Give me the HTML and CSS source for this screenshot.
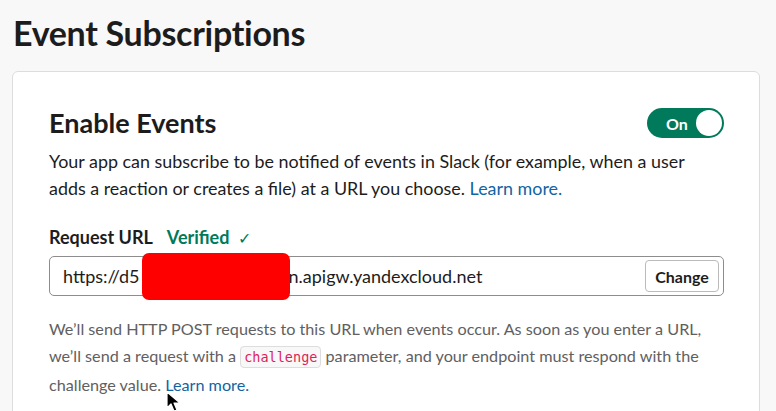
FILE: index.html
```html
<!DOCTYPE html>
<html>
<head>
<meta charset="utf-8">
<link rel="stylesheet" href="styles.css">
</head>
<body>
<div class="page">
  <h1 class="title">Event Subscriptions</h1>
  <section class="card">
    <div class="card-head">
      <h2 class="heading">Enable Events</h2>
      <div class="toggle"><span class="toggle-label">On</span><span class="knob"></span></div>
    </div>
    <p class="desc">Your app can subscribe to be notified of events in Slack (for example, when a user adds a reaction or creates a file) at a URL you choose. <a class="link" href="#">Learn more.</a></p>
    <div class="field-label"><span class="label-text">Request URL</span><span class="verified">Verified <span class="check">✓</span></span></div>
    <div class="url-box">
      <span class="url-text">https://d5<span class="redacted-space"></span>n.apigw.yandexcloud.net</span>
      <button class="change-btn">Change</button>
      <span class="redaction"></span>
    </div>
    <p class="help">We’ll send HTTP POST requests to this URL when events occur. As soon as you enter a URL, we’ll send a request with a <code class="chip">challenge</code> parameter, and your endpoint must respond with the challenge value. <a class="link" href="#">Learn more.</a><span class="cursor"><svg width="16" height="22" viewBox="0 0 16 22"><path d="M1 1 L1 17 L5 13 L8 20 L11 19 L8 12 L14 12 Z" fill="#000" stroke="#fff" stroke-width="1.2" stroke-linejoin="round"/></svg></span></p>
  </section>
</div>
</body>
</html>
```
FILE: styles.css
```css
* { box-sizing: border-box; }
html, body { margin: 0; padding: 0; }
body {
  background: #f8f8f8;
  font-family: Lato, "Open Sans", sans-serif;
  color: #1d1c1d;
  overflow: hidden;
  height: 411px;
}
.page {
  padding: 0 16px 0 12px;
}
.title {
  margin: 0;
  padding: 11px 0 0 1px;
  font-size: 34px;
  font-weight: 700;
  line-height: 44px;
  letter-spacing: -0.3px;
  color: #1d1c1d;
}
.card {
  margin-top: 16px;
  background: #fff;
  border: 1px solid #dddddd;
  border-radius: 6px;
  padding: 36px 35px 40px 36px;
  width: 748px;
}
.card-head {
  display: flex;
  justify-content: space-between;
  align-items: center;
  height: 30px;
}
.heading {
  margin: 0;
  font-size: 27px;
  font-weight: 700;
  line-height: 30px;
}
.toggle {
  width: 77px;
  height: 30px;
  border-radius: 15px;
  background: #007a5a;
  display: flex;
  align-items: center;
  justify-content: space-between;
  padding: 0 2px 0 19px;
}
.toggle-label {
  color: #fff;
  font-size: 16px;
  font-weight: 700;
}
.knob {
  width: 26px;
  height: 26px;
  border-radius: 50%;
  background: #fff;
}
.desc {
  margin: 10px 0 0;
  font-size: 17.9px;
  line-height: 27px;
}
.link {
  color: #1264a3;
  text-decoration: none;
}
.field-label {
  margin-top: 23px;
  display: flex;
  align-items: baseline;
  gap: 14px;
  font-size: 18px;
  line-height: 24px;
  font-weight: 700;
}
.verified {
  color: #007a5a;
}
.check {
  font-weight: 400;
  font-size: 16px;
  margin-left: 4px;
}
.url-box {
  position: relative;
  margin-top: 6px;
  height: 40px;
  border: 1px solid #8d8d8d;
  border-radius: 5px;
  display: flex;
  align-items: center;
  justify-content: space-between;
  padding: 0 4px 0 13px;
}
.url-text {
  font-size: 18px;
  color: #1d1c1d;
}
.redacted-space {
  display: inline-block;
  width: 149px;
}
.redaction {
  position: absolute;
  left: 92px;
  top: -4px;
  width: 148px;
  height: 47px;
  background: #ff0000;
  border-radius: 7px;
}
.change-btn {
  width: 74px;
  height: 32px;
  border: 1px solid #bbbbbb;
  border-radius: 4px;
  background: #fff;
  font-family: Lato, "Open Sans", sans-serif;
  font-size: 16px;
  font-weight: 700;
  color: #1d1c1d;
  padding: 0;
}
.help {
  position: relative;
  margin: 19px 0 0;
  font-size: 16.2px;
  line-height: 27px;
  color: #616061;
}
.chip {
  font-family: "DejaVu Sans Mono", monospace;
  font-size: 13.5px;
  color: #e01e5a;
  background: #f8f8f8;
  border: 1px solid #dddddd;
  border-radius: 4px;
  padding: 2px 3px;
}
.cursor {
  position: absolute;
  left: 117px;
  top: 76px;
  line-height: 0;
}
```
